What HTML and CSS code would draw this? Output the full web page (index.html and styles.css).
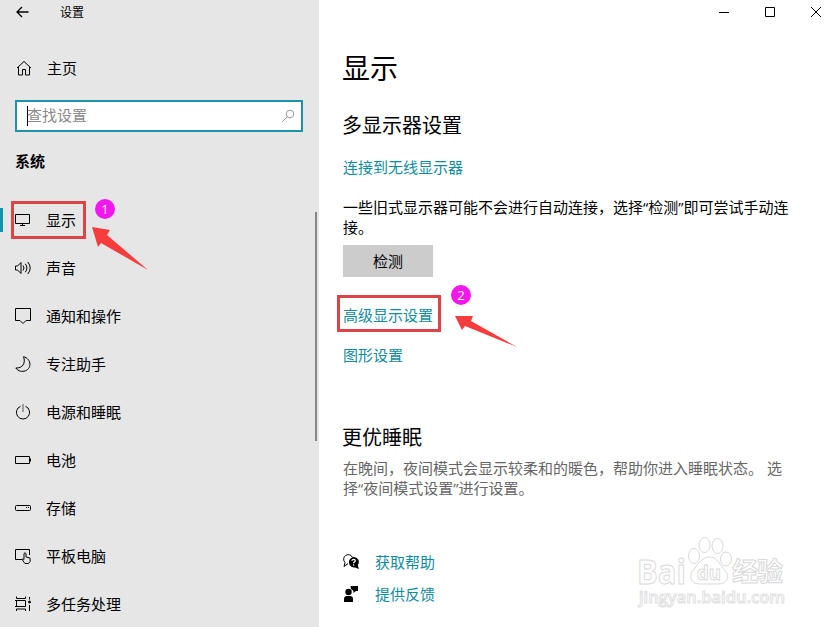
FILE: index.html
```html
<!DOCTYPE html>
<html lang="zh-CN">
<head>
  <meta charset="UTF-8">
  <title>设置</title>
  <meta name="viewport" content="width=device-width, initial-scale=1">
  <link rel="stylesheet" href="styles.css">
</head>
<body>
  <div class="window">
    <!-- Sidebar -->
    <aside class="sidebar">
      <div class="titlebar">
        <svg class="icon back" viewBox="0 0 16 16"><path d="M13.5 8H2M7 3L2 8l5 5"/></svg>
        <span>设置</span>
      </div>
      <div class="home">
        <svg class="icon" viewBox="0 0 16 16"><path d="M1 8l7-6.500 7 6.500M2.500 7v8H6.500V9.500h3V15h4V7"/></svg>
        <span>主页</span>
      </div>
      <div class="search">
        <span class="caret"></span>
        <span class="placeholder">查找设置</span>
        <svg class="icon" viewBox="0 0 16 16"><circle cx="10" cy="6" r="3.800"/><path d="M7.200 8.800L2 14"/></svg>
      </div>
      <h2 class="group-title">系统</h2>
      <nav class="nav">
        <div class="nav-item active">
          <svg class="icon" viewBox="0 0 16 16"><path d="M.5 2.500h14v9H.5zM7.500 11.500v2M5 13.500h5"/></svg>
          <span>显示</span>
        </div>
        <div class="nav-item">
          <svg class="icon wide" viewBox="0 0 17 16"><path d="M.5 6v4H2.500l3.500 3.500v-11L2.500 6zM8 5.500q2 2.500 0 5M10.300 3.800q3.200 4.200 0 8.400M12.800 2q4.800 6 0 12"/></svg>
          <span>声音</span>
        </div>
        <div class="nav-item">
          <svg class="icon" viewBox="0 0 16 16"><path d="M.5.500h15v12H11L8 15.500l-3-3H.5z"/></svg>
          <span>通知和操作</span>
        </div>
        <div class="nav-item">
          <svg class="icon" viewBox="0 0 16 16"><path d="M8.500.7C17 3 17 13.500 9 15.200 5.500 16 2.500 14.500.8 12 7.500 12.500 11 7 8.500.7z"/></svg>
          <span>专注助手</span>
        </div>
        <div class="nav-item">
          <svg class="icon" viewBox="0 0 16 16"><path d="M5.500 2.300a6.600 6.600 0 1 0 5 0"/><path class="soft" d="M8 0v8"/></svg>
          <span>电源和睡眠</span>
        </div>
        <div class="nav-item">
          <svg class="icon" viewBox="0 0 16 16"><path d="M.5 4.500h14v7H.5zM15.500 6.500v3"/></svg>
          <span>电池</span>
        </div>
        <div class="nav-item">
          <svg class="icon" viewBox="0 0 16 16"><rect x=".5" y="5.500" width="15" height="5" rx="1"/><path d="M11 7.500h1M13 7.500h1"/></svg>
          <span>存储</span>
        </div>
        <div class="nav-item">
          <svg class="icon" viewBox="0 0 16 16"><path d="M7 11.500H.5v-10h14V7M9 11.500V5.500q1-1.500 2 0V9l4 1q1.200 4-1.500 5.500h-3.500L7 11.500q1-1.500 2 0"/></svg>
          <span>平板电脑</span>
        </div>
        <div class="nav-item">
          <svg class="icon" viewBox="0 0 16 16"><path d="M1.500.5v2h9v-2M1.500 15v-2h9v2M0 4.500h10.500v6H0M1.500 4.500v6M14.500 1v2.500M14.500 9v6"/><circle class="solid" cx="14.500" cy="6" r="1"/></svg>
          <span>多任务处理</span>
        </div>
      </nav>
      <div class="scrollbar"></div>
    </aside>

    <!-- Content -->
    <main class="content">
      <div class="controls">
        <svg viewBox="0 0 12 12"><path d="M1 6.500h10"/></svg>
        <svg viewBox="0 0 12 12"><path d="M1.500 1.500h9v9h-9z"/></svg>
        <svg viewBox="0 0 12 12"><path d="M1 1l10 10M11 1L1 11"/></svg>
      </div>
      <h1>显示</h1>
      <h3>多显示器设置</h3>
      <a class="link wireless">连接到无线显示器</a>
      <p class="hint">一些旧式显示器可能不会进行自动连接，选择“检测”即可尝试手动连接。</p>
      <button class="detect">检测</button>
      <a class="link advanced">高级显示设置</a>
      <a class="link graphics">图形设置</a>
      <h3 class="sleep-title">更优睡眠</h3>
      <p class="hint muted">在晚间，夜间模式会显示较柔和的暖色，帮助你进入睡眠状态。 选择“夜间模式设置”进行设置。</p>
      <div class="help-row first">
        <svg class="help-icon" viewBox="0 0 16 16"><path class="line" d="M5 9.500L1 12.500l1-4A4.600 4.600 0 1 1 9.500 3.500"/><path d="M10.500 3a5 5 0 0 1 4.300 8l1 4-3.800-1.500A5.300 5.300 0 1 1 10.500 3z"/><path class="mark" d="M9 6.800c0-2 3.500-2 3.200 0-.2 1-1.600 1.100-1.600 2.500M10.600 10.300v1.200"/></svg>
        <a class="link">获取帮助</a>
      </div>
      <div class="help-row">
        <svg class="help-icon" viewBox="0 0 16 16"><circle cx="5.500" cy="6" r="3.200"/><path d="M1 16v-3q0-3 3-3h3q3 0 3 3v3zM7.500 0H15v5h-2l-2.500 2V5L8 3z"/></svg>
        <a class="link">提供反馈</a>
      </div>
    </main>

    <!-- Step marks -->
    <div class="mark-box box-one"></div>
    <div class="badge badge-one">1</div>
    <svg class="arrow arrow-one" viewBox="0 0 56 44"><path d="M0 0l18 3-3 5 41 35L9 16l-3 4z"/></svg>
    <div class="mark-box box-two"></div>
    <div class="badge badge-two">2</div>
    <svg class="arrow arrow-two" viewBox="0 0 62 32"><path d="M0 0h18l-2 5 46 26L10 10l-3 4z"/></svg>

    <!-- Watermark -->
    <svg class="watermark" viewBox="0 0 152 78">
      <g>
        <text x="0" y="49" class="brand" textLength="49" lengthAdjust="spacingAndGlyphs">Bai</text>
        <ellipse cx="57" cy="21" rx="5.500" ry="7.500"/>
        <ellipse cx="67.500" cy="10" rx="5.500" ry="7.500"/>
        <ellipse cx="80.500" cy="11" rx="5.500" ry="7.500"/>
        <ellipse cx="89" cy="24" rx="5.500" ry="7"/>
        <path d="M72.500 22c8 0 10 8 16 14 5 6 1 13-7 13H62.500c-8 0-11-7-7-13 5-6 9-14 17-14z"/>
        <text x="60" y="45" class="du" textLength="24" lengthAdjust="spacingAndGlyphs">du</text>
        <text x="95" y="46" class="cn" textLength="51">经验</text>
        <text x="2" y="68" class="url" textLength="146" lengthAdjust="spacingAndGlyphs">jingyan.baidu.com</text>
      </g>
    </svg>
  </div>
</body>
</html>
```
FILE: styles.css
```css
* { box-sizing: border-box; }
body {
  margin: 0;
  font-family: "Open Sans", "Noto Sans CJK SC", sans-serif;
  font-size: 15px;
  line-height: 20px;
  color: #000;
}
h1, h2, h3, p { margin: 0; font-weight: normal; }
svg { display: block; fill: none; stroke: #000; flex: none; }
.window {
  position: relative;
  display: flex;
  width: 832px;
  height: 627px;
  overflow: hidden;
  background: #fff;
}

/* ====== Sidebar ====== */
.sidebar {
  position: relative;
  width: 319px;
  height: 627px;
  background: #e6e6e6;
  overflow: hidden;
}
.icon { width: 16px; height: 16px; }
.icon.wide { width: 17px; margin-right: -1px; }
.back { stroke-width: 1.3; }
.soft { stroke: #555; }
.solid { fill: #000; }
.titlebar {
  display: flex;
  align-items: center;
  gap: 29px;
  height: 24px;
  padding-left: 15px;
  font-size: 12px;
}
.titlebar span { padding-top: 2px; }
.home {
  display: flex;
  align-items: center;
  gap: 16px;
  height: 24px;
  margin-top: 32px;
  padding-left: 16px;
}
.home span { margin-left: -1px; }
.search {
  display: flex;
  align-items: center;
  width: 288px;
  height: 32px;
  margin: 20px 0 0 15px;
  padding: 0 5px 0 10px;
  border: 2px solid #1e93a8;
  background: #fff;
  color: #8a8a8a;
}
.search .icon { margin-left: auto; stroke: #999; }
.caret { width: 1px; height: 20px; background: #000; }
.placeholder { margin-left: -1px; padding-bottom: 2px; }
.group-title {
  margin: 19px 0 25px 15px;
  font-size: 15px;
  font-weight: bold;
}
.nav-item {
  display: flex;
  align-items: center;
  gap: 15px;
  height: 48px;
  padding-left: 15px;
}
.nav-item.active {
  background: linear-gradient(#1094ab, #1094ab) 0 center / 3px 24px no-repeat;
}
.scrollbar {
  position: absolute;
  left: 315px;
  top: 212px;
  width: 2px;
  height: 229px;
  background: #858585;
}

/* ====== Content ====== */
.content {
  flex: 1;
  padding-left: 24px;
}
.controls {
  display: flex;
  justify-content: flex-end;
  gap: 34px;
  height: 24px;
  padding: 6px 10px 0 0;
}
.controls svg { width: 12px; height: 12px; }
h1 {
  margin: 24px 0 0 -1px;
  font-size: 28px;
  line-height: 40px;
}
h3 {
  margin: 26px 0 0 -1px;
  font-size: 20px;
  line-height: 24px;
}
.link { display: block; color: #118c9f; }
.wireless { margin-top: 19px; }
.hint { width: 456px; margin-top: 20px; }
.hint.muted { width: 445px; margin-top: 8px; color: #666; }
.detect {
  display: block;
  width: 90px;
  height: 32px;
  margin-top: 8px;
  padding: 0;
  border: 0;
  background: #ccc;
  font: inherit;
  color: #000;
}
.advanced { margin-top: 28px; }
.graphics { margin-top: 20px; }
.sleep-title { margin-top: 61px; }
.help-row {
  display: flex;
  align-items: center;
  gap: 16px;
  height: 32px;
}
.help-row.first { margin-top: 48px; }
.help-icon { width: 16px; height: 16px; fill: #000; stroke: none; }
.help-icon .line { fill: none; stroke: #000; }
.help-icon .mark { fill: none; stroke: #fff; stroke-width: 1.3; }

/* ====== Step marks ====== */
.mark-box { position: absolute; border: 3px solid #dc4547; }
.box-one { left: 11px; top: 201px; width: 75px; height: 38px; }
.box-two { left: 337px; top: 295px; width: 104px; height: 37px; }
.badge {
  position: absolute;
  width: 20px;
  height: 20px;
  border-radius: 50%;
  background: #f317ed;
  color: #fff;
  font-size: 13px;
  text-align: center;
}
.badge-one { left: 95px; top: 199px; }
.badge-two { left: 451px; top: 285px; }
.arrow { position: absolute; fill: #f63c3d; stroke: none; }
.arrow-one { left: 92px; top: 227px; width: 56px; height: 44px; }
.arrow-two { left: 455px; top: 316px; width: 62px; height: 32px; }

/* ====== Watermark ====== */
.watermark {
  position: absolute;
  left: 637px;
  top: 535px;
  width: 152px;
  height: 78px;
  fill: #fff;
  stroke: #d9d9d9;
  stroke-width: 1;
}
.watermark text { font-family: "Open Sans", "Noto Sans CJK SC", sans-serif; font-weight: bold; }
.brand { font-size: 34px; }
.du { font-size: 20px; }
.cn { font-size: 26px; }
.watermark .url { font-size: 17px; font-weight: 600; stroke: #e0e0e0; }
```
